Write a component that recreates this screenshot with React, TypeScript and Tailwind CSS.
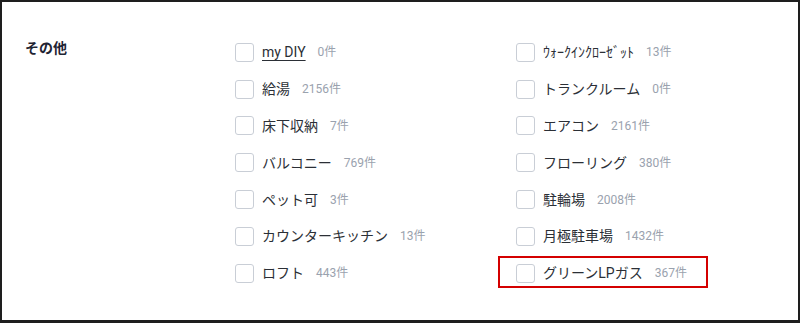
import React from "react";

type Item = { label: string; count: string; underline?: boolean; highlight?: boolean };

const left: Item[] = [
  { label: "my DIY", count: "0件", underline: true },
  { label: "給湯", count: "2156件" },
  { label: "床下収納", count: "7件" },
  { label: "バルコニー", count: "769件" },
  { label: "ペット可", count: "3件" },
  { label: "カウンターキッチン", count: "13件" },
  { label: "ロフト", count: "443件" },
];

const right: Item[] = [
  { label: "ｳｫｰｸｲﾝｸﾛｰｾﾞｯﾄ", count: "13件" },
  { label: "トランクルーム", count: "0件" },
  { label: "エアコン", count: "2161件" },
  { label: "フローリング", count: "380件" },
  { label: "駐輪場", count: "2008件" },
  { label: "月極駐車場", count: "1432件" },
  { label: "グリーンLPガス", count: "367件", highlight: true },
];

function Row({ item }: { item: Item }) {
  return (
    <div className="relative flex h-[36.8px] items-center">
      {item.highlight && (
        <div className="pointer-events-none absolute left-[-18px] top-[1px] h-[32px] w-[210px] border-2 border-[#d40000]" />
      )}
      <span className="block h-[19px] w-[19px] shrink-0 rounded-[3px] border border-[#c9ced6] bg-white" />
      <span
        className={
          "ml-[8px] text-[14px] leading-5 text-[#2b2f36] " +
          (item.underline ? "underline underline-offset-[3px]" : "")
        }
      >
        {item.label}
      </span>
      <span className="ml-[12px] text-[12px] leading-5 text-[#9aa2ae]">{item.count}</span>
    </div>
  );
}

export default function App() {
  return (
    <div
      className="box-border h-[323px] w-[800px] border-x-2 border-t-2 border-b-[3px] border-[#1e1e1e] bg-white"
      style={{ fontFamily: '"Roboto", "Noto Sans CJK JP", sans-serif' }}
    >
      <div className="flex pl-[23px] pt-[32px]">
        <div className="w-[210px] shrink-0 pt-[4px] text-[14px] font-bold leading-5 text-[#1f2433]">
          その他
        </div>
        <div className="grid grid-cols-[281px_281px]">
          <div className="flex flex-col">
            {left.map((it) => (
              <Row key={it.label} item={it} />
            ))}
          </div>
          <div className="flex flex-col">
            {right.map((it) => (
              <Row key={it.label} item={it} />
            ))}
          </div>
        </div>
      </div>
    </div>
  );
}
